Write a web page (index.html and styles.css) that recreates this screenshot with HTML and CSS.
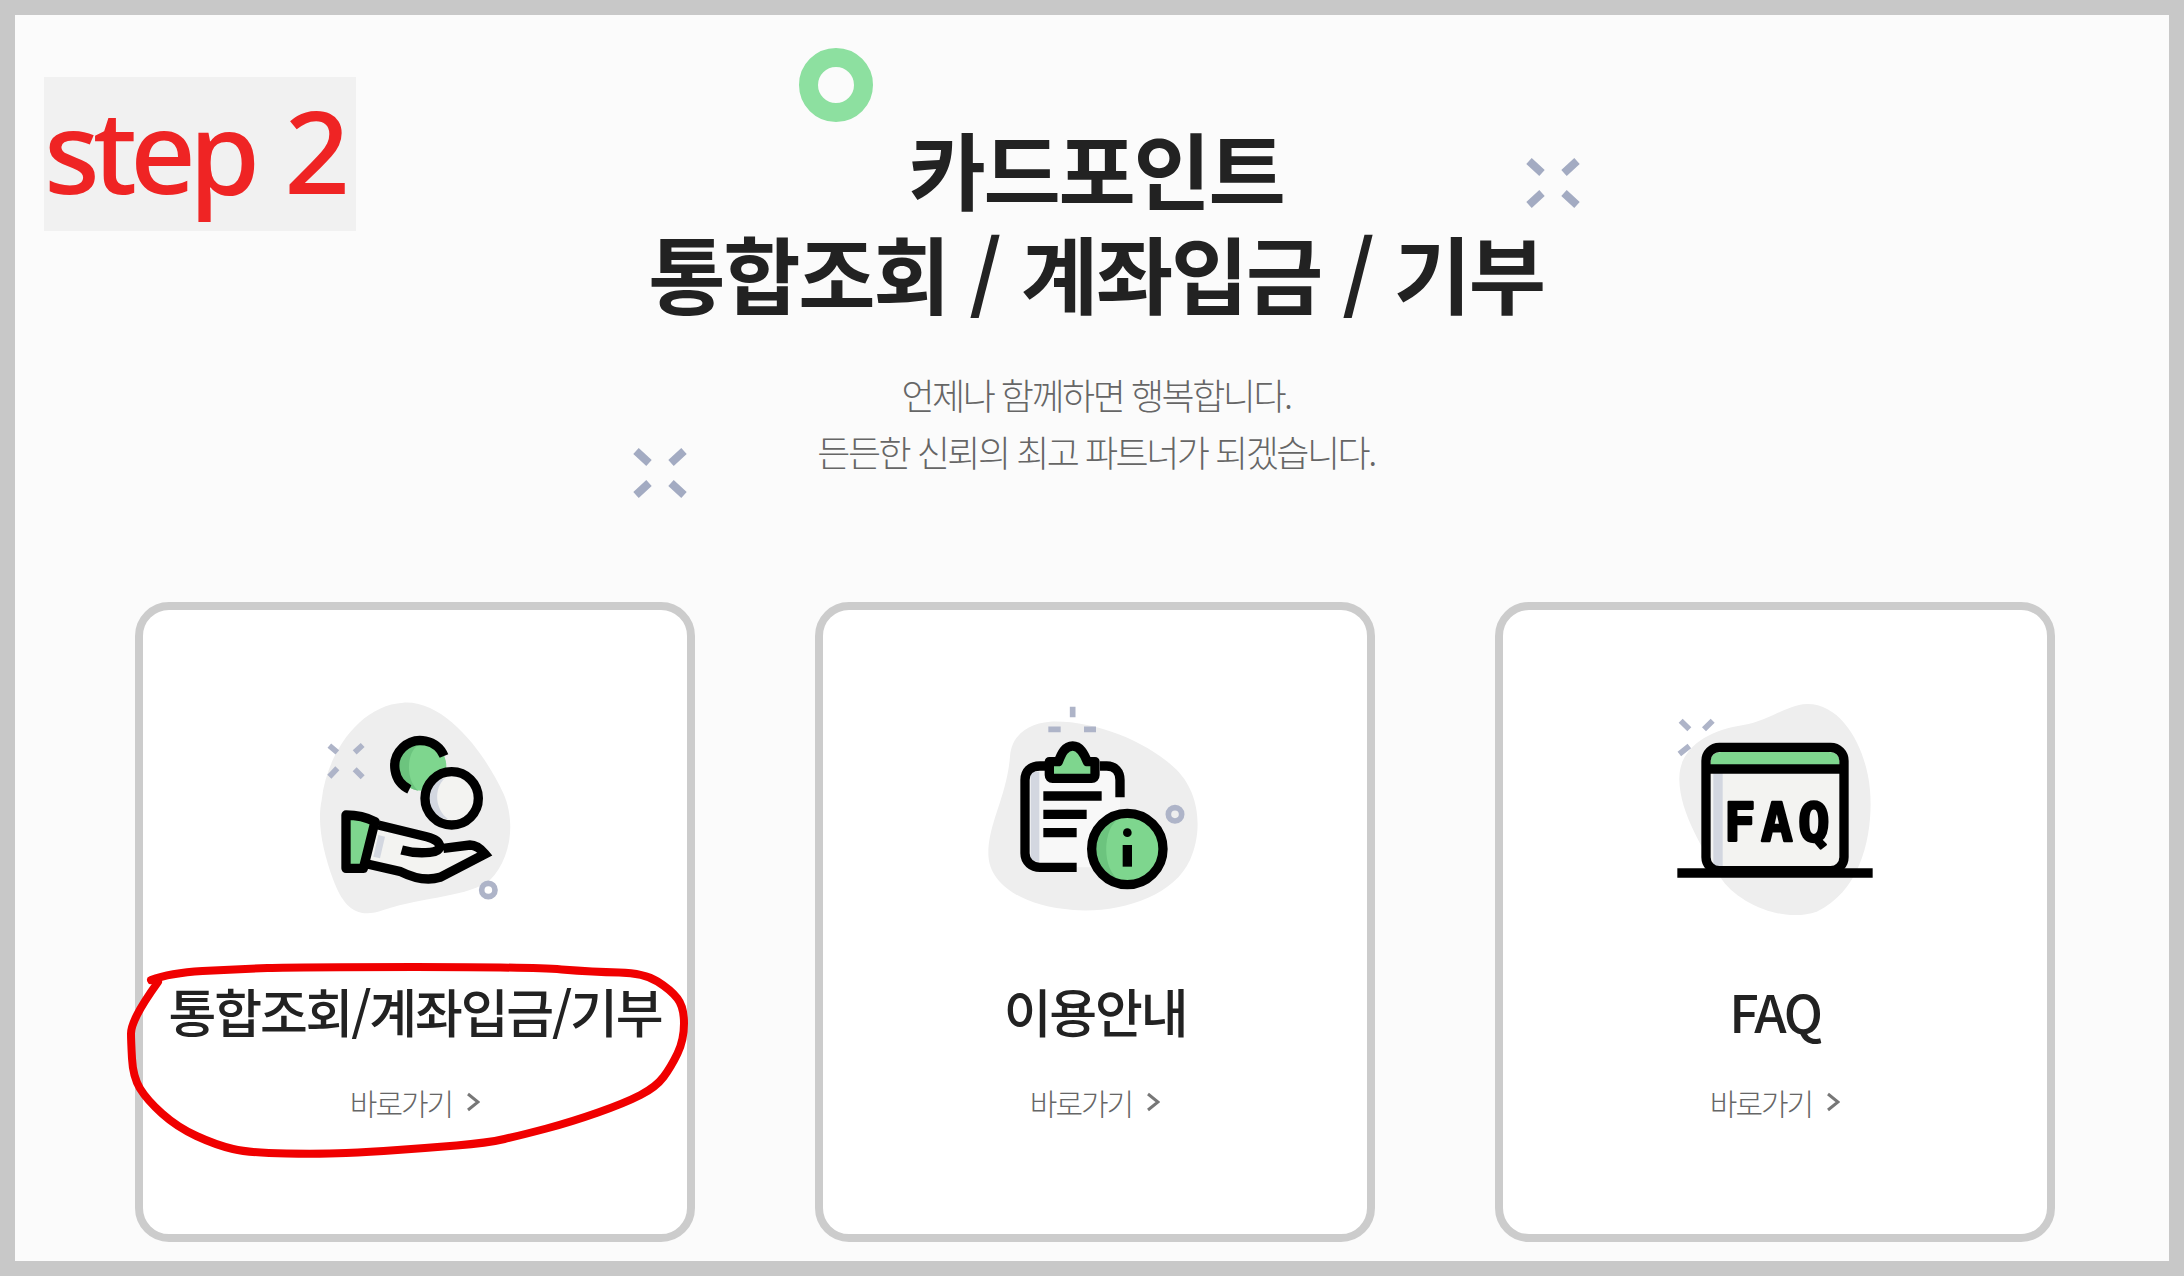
FILE: index.html
```html
<!DOCTYPE html>
<html lang="ko">
<head>
    <meta charset="UTF-8">
    <meta name="viewport" content="width=device-width, initial-scale=1.0">
    <title>카드포인트 통합조회</title>
    <link rel="stylesheet" href="styles.css">
</head>
<body>
<div class="page">
    <!-- pasted-on annotation -->
    <div class="step-tag">step 2</div>

    <!-- floating decorations -->
    <div class="deco-ring"></div>
    <svg class="deco-x deco-x-right" viewBox="0 0 54 54">
        <path d="M3 5 L16 17 M51 5 L38 17 M3 49 L16 37 M51 49 L38 37"/>
    </svg>
    <svg class="deco-x deco-x-left" viewBox="0 0 54 54">
        <path d="M3 5 L16 17 M51 5 L38 17 M3 49 L16 37 M51 49 L38 37"/>
    </svg>

    <header class="intro">
        <h1 class="intro-title">카드포인트<br>통합조회 / 계좌입금 / 기부</h1>
        <p class="intro-text">언제나 함께하면 행복합니다.<br>든든한 신뢰의 최고 파트너가 되겠습니다.</p>
    </header>

    <div class="card-list">
        <a class="card" href="#">
            <svg class="card-icon" viewBox="-15 0 840 720">
                <path class="blob" d="M370 68 C500 60 620 230 670 340 C710 430 690 540 630 600 C570 650 430 650 310 690 C230 720 190 680 160 600 C130 520 110 430 125 360 C140 220 240 75 370 68Z"/>
                <path class="spark" d="M148 197 L172 217 M248 195 L224 217 M172 265 L148 290 M224 268 L248 292"/>
                <circle class="dot-ring" cx="625" cy="630" r="20"/>
                <circle class="green" cx="425" cy="258" r="74"/>
                <path class="green-dark" d="M415 195 C380 215 375 300 415 332 C375 325 352 295 352 258 C352 222 378 195 415 195Z"/>
                <path class="line" d="M492 228 A77 77 0 1 0 388 328"/>
                <circle class="paper" cx="515" cy="355" r="80"/>
                <path class="grey-strip" d="M495 295 C460 325 465 390 505 418 C470 415 448 390 448 355 C448 320 465 298 495 295Z"/>
                <circle class="line" cx="515" cy="355" r="80"/>
                <path class="paper" d="M295 435 L440 470 C470 478 490 495 490 505 L570 495 C590 495 605 510 615 522 L480 592 C440 604 400 594 360 574 L262 552Z"/>
                <path class="grey-strip" d="M295 465 L315 470 L300 535 L280 530Z"/>
                <path class="line" d="M295 435 L440 470 C490 482 490 515 450 517 C420 520 390 517 365 510 M490 505 L570 495 C590 495 605 510 615 522 L480 592 C440 604 400 594 360 574 L262 552"/>
                <path class="green line" stroke-linejoin="round" d="M198 405 C225 405 260 412 285 425 L250 565 L198 565Z"/>
            </svg>
            <strong class="card-title">통합조회/계좌입금/기부</strong>
            <span class="card-link">바로가기 <svg class="chevron" viewBox="0 0 14 20"><path d="M2 2 L12 10 L2 18"/></svg></span>
        </a>

        <a class="card" href="#">
            <svg class="card-icon" viewBox="-15 -30 840 720">
                <path class="blob" d="M270 95 C400 90 550 150 640 230 C720 300 730 420 690 510 C640 620 480 670 340 660 C200 650 85 590 85 490 C85 400 140 320 150 200 C155 130 210 100 270 95Z"/>
                <path class="spark" d="M338 50 L338 82 M265 118 L302 118 M372 118 L408 118"/>
                <circle class="dot-ring" cx="645" cy="373" r="20"/>
                <path class="sheet" d="M240 228 H440 C465 228 480 245 480 270 V490 C480 515 465 532 440 532 H240 C215 532 195 515 195 490 V270 C195 245 210 228 240 228Z"/>
                <rect class="grey-strip" x="212" y="245" width="26" height="270"/>
                <path class="line" d="M262 228 H240 C210 228 195 245 195 270 V490 C195 515 215 532 240 532 H350 M420 228 H440 C465 228 480 245 480 270 V322"/>
                <path class="green line" stroke-linejoin="round" d="M268 215 H295 C305 190 315 168 338 168 C360 168 372 190 382 215 H405 V255 Q405 265 395 265 H278 Q268 265 268 255Z"/>
                <path class="line" d="M250 318 H425 M250 373 H380 M250 428 H350"/>
                <circle class="green" cx="502" cy="477" r="107"/>
                <path class="green-dark" d="M480 385 C425 410 425 545 480 570 C430 560 398 525 398 477 C398 430 430 392 480 385Z"/>
                <circle class="line" cx="502" cy="477" r="107"/>
                <circle class="ink" cx="502" cy="428" r="13"/>
                <rect class="ink" x="488" y="465" width="28" height="65"/>
            </svg>
            <strong class="card-title">이용안내</strong>
            <span class="card-link">바로가기 <svg class="chevron" viewBox="0 0 14 20"><path d="M2 2 L12 10 L2 18"/></svg></span>
        </a>

        <a class="card" href="#">
            <svg class="card-icon" viewBox="-45 -30 840 720">
                <path class="blob" d="M470 42 C580 40 650 180 660 300 C670 420 640 600 500 665 C400 700 260 640 210 560 C160 480 90 370 88 270 C85 170 180 120 280 105 C350 95 410 45 470 42Z"/>
                <path class="spark" d="M92 92 L118 118 M188 92 L162 118 M118 168 L88 192"/>
                <rect class="paper" x="168" y="172" width="414" height="370" rx="40"/>
                <rect class="grey-strip" x="190" y="245" width="28" height="285"/>
                <path class="green" d="M182 232 V215 C182 195 195 186 215 186 H535 C555 186 568 195 568 215 V232Z"/>
                <rect class="line" x="168" y="172" width="414" height="370" rx="40"/>
                <path class="line" d="M168 237 H582"/>
                <text class="faq-text" x="222" y="452">FAQ</text>
                <path class="line" d="M82 549 H668"/>
            </svg>
            <strong class="card-title">FAQ</strong>
            <span class="card-link">바로가기 <svg class="chevron" viewBox="0 0 14 20"><path d="M2 2 L12 10 L2 18"/></svg></span>
        </a>
    </div>

    <!-- hand drawn circle around the first card -->
    <svg class="scribble" viewBox="0 0 2154 1246">
        <path d="M136 965 Q155 958 187.5 956 Q220 954 252.5 953 Q285 952 400 952 Q514 952 546.5 954.5 Q579 957 604 957.5 Q629 958 642.5 966.5 Q656 975 662.5 983.5 Q669 992 669 1008.5 Q669 1025 662.5 1038.5 Q656 1052 648.5 1062 Q641 1072 625.5 1080 Q610 1088 583 1097.5 Q556 1107 531.5 1113.5 Q507 1120 489.5 1124 Q472 1128 441.5 1130.5 Q411 1133 382.5 1135 Q354 1137 331 1138 Q308 1139 271.5 1138.5 Q235 1138 218 1134 Q201 1130 181.5 1121 Q162 1112 147 1098.5 Q132 1085 125 1073.5 Q118 1062 117 1043.5 Q116 1025 116 1018.5 Q116 1012 122 1000 Q128 988 143 967"/>
    </svg>
</div>
</body>
</html>
```

FILE: styles.css
```css
* {
	box-sizing: border-box;
}

body {
	margin: 0;
	font-family: "Noto Sans CJK KR", "Noto Sans", sans-serif;
	color: #222;
}

a {
	color: inherit;
	text-decoration: none;
}

.page {
	position: relative;
	height: 1276px;
	border: 15px solid #c8c8c8;
	background: #fbfbfb;
	overflow: hidden;
}

/* annotation + decorations */
.step-tag {
	position: absolute;
	left: 29px;
	top: 62px;
	width: 312px;
	height: 154px;
	background: #f1f1f1;
	color: #ef2424;
	font-family: "Noto Sans", sans-serif;
	font-size: 115px;
	font-weight: 500;
	line-height: 146px;
	letter-spacing: -7px;
	white-space: pre;
	word-spacing: 8px;
}

.deco-ring {
	position: absolute;
	left: 784px;
	top: 33px;
	width: 74px;
	height: 74px;
	border: 19px solid #8de0a0;
	border-radius: 50%;
}

.deco-x {
	position: absolute;
	width: 54px;
	height: 54px;
}

.deco-x path {
	fill: none;
	stroke: #a3abc2;
	stroke-width: 8;
}

.deco-x-right {
	left: 1511px;
	top: 141px;
}

.deco-x-left {
	left: 618px;
	top: 431px;
}

.scribble {
	position: absolute;
	left: 0;
	top: 0;
	width: 2154px;
	height: 1246px;
	pointer-events: none;
}

.scribble path {
	fill: none;
	stroke: #f00000;
	stroke-width: 8;
	stroke-linecap: round;
	stroke-linejoin: round;
}

/* heading */
.intro {
	text-align: center;
	padding: 101px 0 0 8px;
}

.intro-title {
	margin: 0;
	font-size: 84px;
	line-height: 104px;
	font-weight: 700;
	letter-spacing: -2.3px;
}

.intro-text {
	margin: 42px 0 0;
	font-size: 36px;
	line-height: 57px;
	font-weight: 300;
	letter-spacing: -2.5px;
	color: #666;
}

/* cards */
.card-list {
	display: flex;
	gap: 120px;
	padding-left: 120px;
	margin-top: 122px;
}

.card {
	display: flex;
	flex-direction: column;
	align-items: center;
	width: 560px;
	height: 640px;
	padding-top: 70px;
	background: #fff;
	border: 8px solid #ccc;
	border-radius: 34px;
}

.card-icon {
	display: block;
	width: 280px;
	height: 240px;
	filter: blur(0.6px);
}

.card-title {
	margin-top: 53px;
	font-size: 52px;
	line-height: 76px;
	font-weight: 500;
	letter-spacing: -2.2px;
	white-space: nowrap;
}

.card-link {
	display: flex;
	align-items: center;
	gap: 14px;
	margin-top: 31px;
	font-size: 30px;
	line-height: 44px;
	font-weight: 300;
	letter-spacing: -2px;
	color: #666;
}

.chevron {
	width: 14px;
	height: 20px;
}

.chevron path {
	fill: none;
	stroke: #777;
	stroke-width: 3;
}

/* icon parts */
.blob {
	fill: #eeeeee;
}

.spark {
	fill: none;
	stroke: #aeb4c8;
	stroke-width: 17;
}

.dot-ring {
	fill: none;
	stroke: #aeb4c8;
	stroke-width: 17;
}

.green {
	fill: #7ed68e;
}

.green-dark {
	fill: #6cc47e;
}

.paper {
	fill: #f3f3f1;
}

.sheet {
	fill: #f8f8f8;
}

.grey-strip {
	fill: #d3d7e0;
}

.line {
	stroke: #000;
	stroke-width: 28;
}

path.line:not(.green),
rect.line,
circle.line {
	fill: none;
}

.ink {
	fill: #000;
}

.faq-text {
	font-family: "DejaVu Sans Mono", monospace;
	font-size: 158px;
	font-weight: 700;
	letter-spacing: 16px;
	fill: #000;
	stroke: #000;
	stroke-width: 7;
	stroke-linejoin: round;
}
```
